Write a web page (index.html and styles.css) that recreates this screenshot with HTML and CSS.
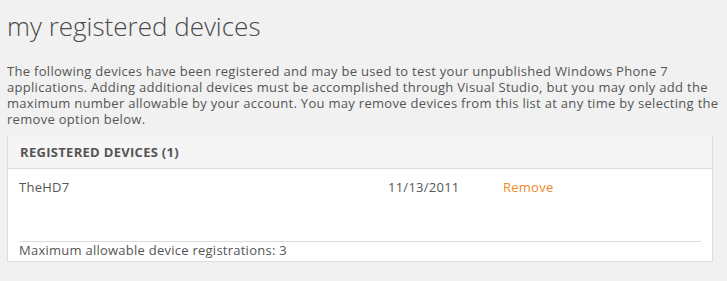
FILE: index.html
```html
<!DOCTYPE html>
<html lang="en">
<head>
    <meta charset="UTF-8">
    <title>My Registered Devices</title>
    <link rel="stylesheet" href="styles.css">
</head>
<body>
    <div class="page">
        <h1>my registered devices</h1>

        <p class="intro">The following devices have been registered and may be used to test your unpublished Windows Phone 7 applications. Adding additional devices must be accomplished through Visual Studio, but you may only add the maximum number allowable by your account. You may remove devices from this list at any time by selecting the remove option below.</p>

        <div class="panel">
            <div class="panel-header">REGISTERED DEVICES (1)</div>
            <table class="devices">
                <tbody>
                    <tr>
                        <td class="name">TheHD7</td>
                        <td class="date">11/13/2011</td>
                        <td class="actions"><a href="#" class="remove">Remove</a></td>
                    </tr>
                </tbody>
            </table>
            <div class="panel-footer">Maximum allowable device registrations: 3</div>
        </div>
    </div>
</body>
</html>
```

FILE: styles.css
```css
body {
    margin: 0;
    background-color: #f1f1f1;
    font-family: "Open Sans", "Noto Sans", Arial, sans-serif;
    color: #555;
}

.page {
    width: 713px;
    padding: 0 7px;
}

h1 {
    margin: 8px 0 0 0;
    font-size: 26px;
    font-weight: 300;
    line-height: 36px;
    color: #4a4a4a;
}

.intro {
    margin: 19px 0 0 0;
    font-size: 13px;
    letter-spacing: 0.3px;
    line-height: 16px;
}

.panel {
    margin-top: 9px;
    width: 704px;
    background-color: white;
    border: 1px solid #dcdcdc;
    border-top: none;
}

.panel-header {
    background-color: #f5f5f5;
    border-bottom: 1px solid #dcdcdc;
    padding: 0 12px;
    height: 32px;
    line-height: 33px;
    font-size: 13px;
    letter-spacing: 0.3px;
    font-weight: bold;
    color: #555;
}

.devices {
    margin: 0 11px;
    width: 682px;
    border-collapse: collapse;
    font-size: 13px;
    letter-spacing: 0.25px;
}

.devices td {
    height: 72px;
    padding: 9px 0 0 0;
    vertical-align: top;
    box-sizing: border-box;
}

.name {
    width: 369px;
}

.date {
    width: 115px;
}

.remove {
    color: #ee8a2a;
    text-decoration: none;
}

.panel-footer {
    margin: 0 11px;
    border-top: 1px solid #dcdcdc;
    height: 19px;
    line-height: 17px;
    font-size: 13px;
    letter-spacing: 0.25px;
    overflow: hidden;
}
```
